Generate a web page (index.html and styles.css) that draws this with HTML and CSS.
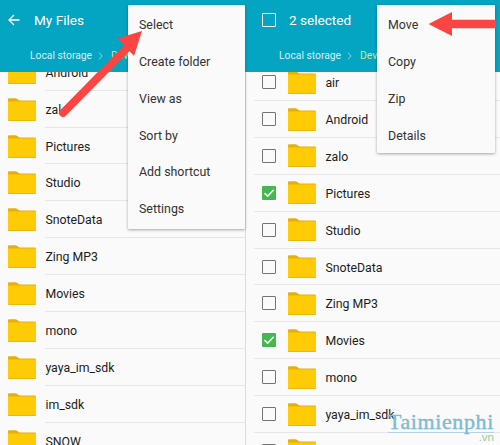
FILE: index.html
```html
<!DOCTYPE html>
<html lang="en">
<head>
<meta charset="utf-8">
<title>My Files</title>
<link rel="stylesheet" href="styles.css">
</head>
<body>
<svg width="0" height="0" class="defs">
  <symbol id="folder" viewBox="0 0 28 23">
    <path d="M0 1.2Q0 .2 1 .2H8L11.5 2.6H26.8Q28 2.6 28 3.8V22Q28 23 27 23H1Q0 23 0 22Z" fill="#e3b010"/>
    <path d="M0 3.6H11L12.5 3.4H28V21.3Q28 22.3 27 22.3H1Q0 22.3 0 21.3Z" fill="#ffcb05"/>
  </symbol>
  <symbol id="check" viewBox="0 0 14 14">
    <path d="M2.5 7.2L5.7 10.2L11.7 3.7" fill="none" stroke="#fff" stroke-width="1.6"/>
  </symbol>
</svg>
<main class="screens">
  <section class="screen">
    <header class="bar">
      <div class="title-row">
        <svg class="back" viewBox="0 0 12 12"><path d="M11.5 6H1M6 1L1 6L6 11" fill="none" stroke="#fff" stroke-width="1.3"/></svg>
        <h1>My Files</h1>
      </div>
      <div class="crumbs"><span>Local storage</span><svg viewBox="0 0 5 8"><path d="M1 .5L4 4L1 7.5" fill="none" stroke="#8ed3df"/></svg><b>Dev</b></div>
    </header>
    <ul class="files">
      <li><svg class="folder"><use href="#folder"/></svg><span>Android</span></li>
      <li><svg class="folder"><use href="#folder"/></svg><span>zalo</span></li>
      <li><svg class="folder"><use href="#folder"/></svg><span>Pictures</span></li>
      <li><svg class="folder"><use href="#folder"/></svg><span>Studio</span></li>
      <li><svg class="folder"><use href="#folder"/></svg><span>SnoteData</span></li>
      <li><svg class="folder"><use href="#folder"/></svg><span>Zing MP3</span></li>
      <li><svg class="folder"><use href="#folder"/></svg><span>Movies</span></li>
      <li><svg class="folder"><use href="#folder"/></svg><span>mono</span></li>
      <li><svg class="folder"><use href="#folder"/></svg><span>yaya_im_sdk</span></li>
      <li><svg class="folder"><use href="#folder"/></svg><span>im_sdk</span></li>
      <li><svg class="folder"><use href="#folder"/></svg><span>SNOW</span></li>
    </ul>
    <nav class="menu"><a>Select</a><a>Create folder</a><a>View as</a><a>Sort by</a><a>Add shortcut</a><a>Settings</a></nav>
  </section>
  <section class="screen selecting">
    <header class="bar">
      <div class="title-row">
        <i class="box"></i>
        <h1>2 selected</h1>
      </div>
      <div class="crumbs"><span>Local storage</span><svg viewBox="0 0 5 8"><path d="M1 .5L4 4L1 7.5" fill="none" stroke="#8ed3df"/></svg><b>Devi</b></div>
    </header>
    <ul class="files">
      <li><i class="box"></i><svg class="folder"><use href="#folder"/></svg><span>air</span></li>
      <li><i class="box"></i><svg class="folder"><use href="#folder"/></svg><span>Android</span></li>
      <li><i class="box"></i><svg class="folder"><use href="#folder"/></svg><span>zalo</span></li>
      <li><svg class="box on"><use href="#check"/></svg><svg class="folder"><use href="#folder"/></svg><span>Pictures</span></li>
      <li><i class="box"></i><svg class="folder"><use href="#folder"/></svg><span>Studio</span></li>
      <li><i class="box"></i><svg class="folder"><use href="#folder"/></svg><span>SnoteData</span></li>
      <li><i class="box"></i><svg class="folder"><use href="#folder"/></svg><span>Zing MP3</span></li>
      <li><svg class="box on"><use href="#check"/></svg><svg class="folder"><use href="#folder"/></svg><span>Movies</span></li>
      <li><i class="box"></i><svg class="folder"><use href="#folder"/></svg><span>mono</span></li>
      <li><i class="box"></i><svg class="folder"><use href="#folder"/></svg><span>yaya_im_sdk</span></li>
      <li><i class="box"></i><svg class="folder"><use href="#folder"/></svg><span></span></li>
    </ul>
    <nav class="menu"><a>Move</a><a>Copy</a><a>Zip</a><a>Details</a></nav>
  </section>
</main>
<svg class="arrows" viewBox="0 0 500 445">
  <path d="M63 113L129 46" stroke="#fb4542" stroke-width="8" stroke-linecap="round"/>
  <path d="M142 31L117.5 38.5L134 56Z" fill="#fb4542"/>
  <path d="M448 24H496" stroke="#fb4542" stroke-width="8.5"/>
  <path d="M428.5 24L452 12V36Z" fill="#fb4542"/>
</svg>
<div class="watermark"><span class="name">Taimienphi</span><span class="tld">.vn</span></div>
</body>
</html>
```
FILE: styles.css
```css
* { box-sizing: border-box; }
body {
  margin: 0;
  width: 500px;
  height: 445px;
  overflow: hidden;
  position: relative;
  background: #fafafa;
  font-family: Roboto, "Liberation Sans", sans-serif;
  color: #222;
}
.defs { position: absolute; }
.screens { display: grid; grid-template-columns: 245px 255px; height: 445px; }
.screen {
  position: relative;
  display: flex;
  flex-direction: column;
  background: #fafafa;
  min-width: 0;
}
.bar {
  flex: none;
  height: 72px;
  background: #03a5c2;
  color: #fff;
}
.title-row { display: flex; align-items: center; height: 40px; padding-left: 8px; }
.back { width: 12px; height: 12px; margin-right: 14px; }
h1 { margin: 0; font-size: 13.6px; font-weight: 400; line-height: 16px; }
.crumbs {
  display: flex;
  align-items: center;
  height: 31px;
  padding-left: 30px;
  font-size: 10.3px;
  white-space: nowrap;
  color: #d5f0f5;
}
.crumbs svg { width: 5px; height: 8px; margin: 0 8px 0 6px; }
.crumbs b { font-weight: 400; color: #d9e47f; }
.files {
  list-style: none;
  margin: 0;
  padding: 0;
  flex: 1;
  min-height: 0;
  overflow: hidden;
}
.files li {
  display: flex;
  align-items: center;
  height: 36.88px;
  padding-left: 8px;
  font-size: 12.3px;
  color: #1c1c1c;
}
.files li:first-child { margin-top: -18.2px; }
.files span {
  flex: 1;
  align-self: stretch;
  line-height: 38px;
  border-bottom: 1px solid #e6e6e6;
}
.folder { flex: none; width: 28px; height: 23px; margin-right: 9.4px; }
.box {
  flex: none;
  width: 14px;
  height: 14px;
  border: 1.5px solid #747474;
  border-radius: 1px;
  margin-right: 12px;
}
.box.on { border: 0; background: #43b84e; }
.selecting .files { border-left: 1px solid #dcdcdc; }
.selecting .title-row { padding-left: 17px; }
.selecting .title-row .box { border-color: #fff; margin-right: 13px; }
.selecting .crumbs { padding-left: 34px; }
.selecting .files li {
  padding-left: 8px;
  margin-left: 8px;
  border-bottom: 1px solid #e6e6e6;
}
.selecting .files li:first-child { margin-top: -7.8px; }
.selecting .files span { border: 0; }
.menu {
  position: absolute;
  left: 128px;
  top: 5px;
  z-index: 1;
  width: 117px;
  padding: 1px 0 2px;
  background: #fafafa;
  border-radius: 1px;
  box-shadow: 0 1px 3px rgba(0, 0, 0, .35);
}
.selecting .menu { left: 132px; width: 118px; }
.selecting .menu { padding-bottom: 0; }
.menu a {
  display: block;
  height: 36.85px;
  padding-left: 11px;
  line-height: 37px;
  font-size: 12.4px;
  color: #333;
}
.arrows { position: absolute; inset: 0; z-index: 2; width: 500px; height: 445px; }
.watermark {
  position: absolute;
  left: 388px;
  top: 411px;
  width: 106px;
  font-family: "Liberation Serif", serif;
  line-height: 1;
}
.name {
  display: block;
  height: 22px;
  border-bottom: 1px solid #b7d3df;
  font-size: 22px;
  letter-spacing: .6px;
  line-height: 22px;
  color: #82b9d6;
  -webkit-text-stroke: .4px #82b9d6;
}
.tld {
  display: block;
  height: 10px;
  text-align: right;
  font-family: "Liberation Sans", sans-serif;
  font-size: 11.5px;
  line-height: 9px;
  color: #93cc99;
}
```
